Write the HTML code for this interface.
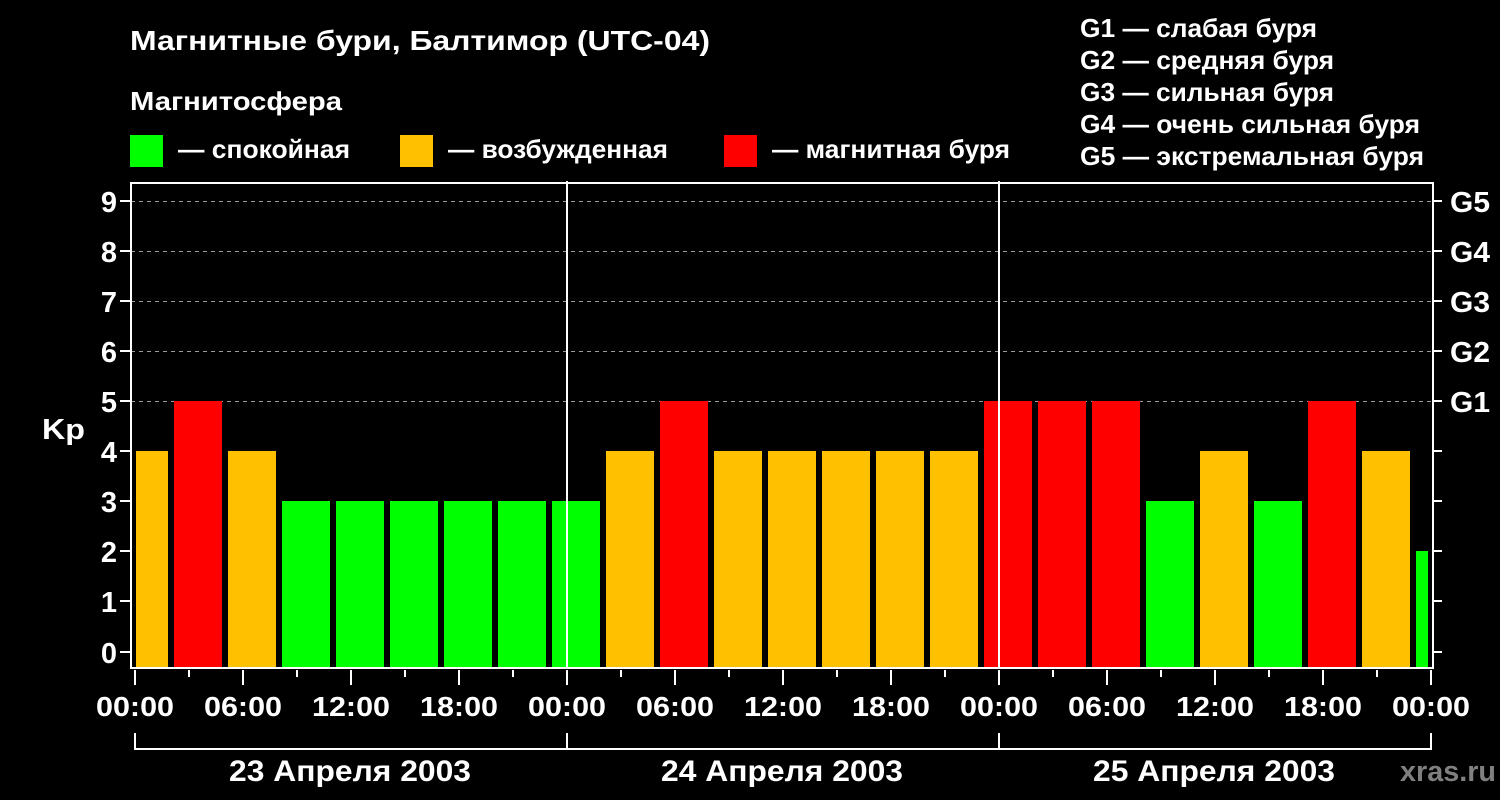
<!DOCTYPE html>
<html><head><meta charset="utf-8"><style>html,body{margin:0;padding:0;background:#000;}svg{display:block}</style></head><body>
<svg width="1500" height="800" viewBox="0 0 1500 800" xmlns="http://www.w3.org/2000/svg" font-family="'Liberation Sans', sans-serif" font-weight="bold" fill="#fff">
<rect width="1500" height="800" fill="#000"/>
<text x="130" y="50" font-size="28" textLength="580" lengthAdjust="spacingAndGlyphs">Магнитные бури, Балтимор (UTC-04)</text>
<text x="130" y="110" font-size="26" textLength="212" lengthAdjust="spacingAndGlyphs">Магнитосфера</text>
<rect x="130" y="135" width="33" height="32" fill="#00ff00"/>
<text x="178" y="158" font-size="26" textLength="172" lengthAdjust="spacingAndGlyphs">— спокойная</text>
<rect x="400" y="135" width="33" height="32" fill="#ffc000"/>
<text x="448" y="158" font-size="26" textLength="220" lengthAdjust="spacingAndGlyphs">— возбужденная</text>
<rect x="724" y="135" width="33" height="32" fill="#ff0000"/>
<text x="772" y="158" font-size="26" textLength="238" lengthAdjust="spacingAndGlyphs">— магнитная буря</text>
<g font-size="26" lengthAdjust="spacingAndGlyphs">
<text x="1080" y="37" textLength="237" lengthAdjust="spacingAndGlyphs">G1 — слабая буря</text>
<text x="1080" y="69" textLength="254" lengthAdjust="spacingAndGlyphs">G2 — средняя буря</text>
<text x="1080" y="101" textLength="254" lengthAdjust="spacingAndGlyphs">G3 — сильная буря</text>
<text x="1080" y="133" textLength="340" lengthAdjust="spacingAndGlyphs">G4 — очень сильная буря</text>
<text x="1080" y="165" textLength="344" lengthAdjust="spacingAndGlyphs">G5 — экстремальная буря</text>
</g>
<g stroke="#999" stroke-width="1" stroke-dasharray="4,4">
<line x1="131" y1="201.5" x2="1433" y2="201.5"/><line x1="131" y1="251.5" x2="1433" y2="251.5"/><line x1="131" y1="301.5" x2="1433" y2="301.5"/><line x1="131" y1="351.5" x2="1433" y2="351.5"/><line x1="131" y1="401.5" x2="1433" y2="401.5"/>
</g>
<g>
<rect x="136" y="451" width="32" height="217" fill="#ffc000"/>
<rect x="174" y="401" width="48" height="267" fill="#ff0000"/>
<rect x="228" y="451" width="48" height="217" fill="#ffc000"/>
<rect x="282" y="501" width="48" height="167" fill="#00ff00"/>
<rect x="336" y="501" width="48" height="167" fill="#00ff00"/>
<rect x="390" y="501" width="48" height="167" fill="#00ff00"/>
<rect x="444" y="501" width="48" height="167" fill="#00ff00"/>
<rect x="498" y="501" width="48" height="167" fill="#00ff00"/>
<rect x="552" y="501" width="48" height="167" fill="#00ff00"/>
<rect x="606" y="451" width="48" height="217" fill="#ffc000"/>
<rect x="660" y="401" width="48" height="267" fill="#ff0000"/>
<rect x="714" y="451" width="48" height="217" fill="#ffc000"/>
<rect x="768" y="451" width="48" height="217" fill="#ffc000"/>
<rect x="822" y="451" width="48" height="217" fill="#ffc000"/>
<rect x="876" y="451" width="48" height="217" fill="#ffc000"/>
<rect x="930" y="451" width="48" height="217" fill="#ffc000"/>
<rect x="984" y="401" width="48" height="267" fill="#ff0000"/>
<rect x="1038" y="401" width="48" height="267" fill="#ff0000"/>
<rect x="1092" y="401" width="48" height="267" fill="#ff0000"/>
<rect x="1146" y="501" width="48" height="167" fill="#00ff00"/>
<rect x="1200" y="451" width="48" height="217" fill="#ffc000"/>
<rect x="1254" y="501" width="48" height="167" fill="#00ff00"/>
<rect x="1308" y="401" width="48" height="267" fill="#ff0000"/>
<rect x="1362" y="451" width="48" height="217" fill="#ffc000"/>
<rect x="1416" y="551" width="12" height="117" fill="#00ff00"/>
</g>
<g stroke="#fff" stroke-width="2" fill="none">
<rect x="131" y="183" width="1302" height="485"/>
<line x1="567" y1="181" x2="567" y2="668"/><line x1="999" y1="181" x2="999" y2="668"/>
<path d="M120 201H131M120 251H131M120 301H131M120 351H131M120 401H131M120 451H131M120 501H131M120 551H131M120 601H131M120 652H131"/>
<path d="M1433 201H1442M1433 251H1442M1433 301H1442M1433 351H1442M1433 401H1442M1433 451H1442M1433 501H1442M1433 551H1442M1433 601H1442M1433 652H1442"/>
<path d="M135 670V685M243 670V685M351 670V685M459 670V685M567 670V685M675 670V685M783 670V685M891 670V685M999 670V685M1107 670V685M1215 670V685M1323 670V685M1431 670V685"/>
<path d="M189 670V677M297 670V677M405 670V677M513 670V677M621 670V677M729 670V677M837 670V677M945 670V677M1053 670V677M1161 670V677M1269 670V677M1377 670V677"/>
<path d="M135 733V749H1431V733M567 733V749M999 733V749"/>
</g>
<g font-size="29" text-anchor="end">
<text x="117" y="212">9</text><text x="117" y="262">8</text><text x="117" y="312">7</text><text x="117" y="362">6</text><text x="117" y="412">5</text><text x="117" y="462">4</text><text x="117" y="512">3</text><text x="117" y="562">2</text><text x="117" y="612">1</text><text x="117" y="663">0</text>
</g>
<text x="42" y="439" font-size="29" textLength="43" lengthAdjust="spacingAndGlyphs">Kp</text>
<g font-size="29">
<text x="1450" y="212" textLength="40" lengthAdjust="spacingAndGlyphs">G5</text><text x="1450" y="262" textLength="40" lengthAdjust="spacingAndGlyphs">G4</text><text x="1450" y="312" textLength="40" lengthAdjust="spacingAndGlyphs">G3</text><text x="1450" y="362" textLength="40" lengthAdjust="spacingAndGlyphs">G2</text><text x="1450" y="412" textLength="40" lengthAdjust="spacingAndGlyphs">G1</text>
</g>
<g font-size="28">
<text x="96" y="716" textLength="78" lengthAdjust="spacingAndGlyphs">00:00</text><text x="204" y="716" textLength="78" lengthAdjust="spacingAndGlyphs">06:00</text><text x="312" y="716" textLength="78" lengthAdjust="spacingAndGlyphs">12:00</text><text x="420" y="716" textLength="78" lengthAdjust="spacingAndGlyphs">18:00</text>
<text x="528" y="716" textLength="78" lengthAdjust="spacingAndGlyphs">00:00</text><text x="636" y="716" textLength="78" lengthAdjust="spacingAndGlyphs">06:00</text><text x="744" y="716" textLength="78" lengthAdjust="spacingAndGlyphs">12:00</text><text x="852" y="716" textLength="78" lengthAdjust="spacingAndGlyphs">18:00</text>
<text x="960" y="716" textLength="78" lengthAdjust="spacingAndGlyphs">00:00</text><text x="1068" y="716" textLength="78" lengthAdjust="spacingAndGlyphs">06:00</text><text x="1176" y="716" textLength="78" lengthAdjust="spacingAndGlyphs">12:00</text><text x="1284" y="716" textLength="78" lengthAdjust="spacingAndGlyphs">18:00</text>
<text x="1392" y="716" textLength="78" lengthAdjust="spacingAndGlyphs">00:00</text>
</g>
<g font-size="30">
<text x="229" y="781" textLength="242" lengthAdjust="spacingAndGlyphs">23 Апреля 2003</text>
<text x="661" y="781" textLength="242" lengthAdjust="spacingAndGlyphs">24 Апреля 2003</text>
<text x="1093" y="781" textLength="242" lengthAdjust="spacingAndGlyphs">25 Апреля 2003</text>
</g>
<text x="1400" y="781" font-size="29" fill="#808080" textLength="96" lengthAdjust="spacingAndGlyphs">xras.ru</text>
</svg>
</body></html>
